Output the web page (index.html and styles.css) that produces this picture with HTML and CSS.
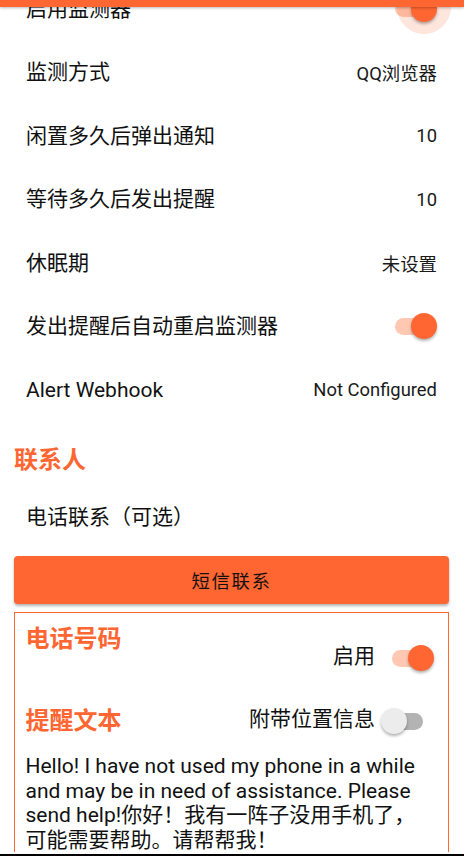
FILE: index.html
```html
<!DOCTYPE html>
<html lang="zh">
<head>
<meta charset="utf-8">
<title>设置</title>
<link rel="stylesheet" href="styles.css">
</head>
<body>
<div class="screen">
  <div class="appbar"></div>
  <div class="content">
    <div class="row">
      <span class="label">启用监测器</span>
      <span class="switch on pressed"><span class="track"></span><span class="thumb"></span></span>
    </div>
    <div class="row">
      <span class="label">监测方式</span>
      <span class="value">QQ浏览器</span>
    </div>
    <div class="row">
      <span class="label">闲置多久后弹出通知</span>
      <span class="value">10</span>
    </div>
    <div class="row">
      <span class="label">等待多久后发出提醒</span>
      <span class="value">10</span>
    </div>
    <div class="row">
      <span class="label">休眠期</span>
      <span class="value">未设置</span>
    </div>
    <div class="row">
      <span class="label">发出提醒后自动重启监测器</span>
      <span class="switch on"><span class="track"></span><span class="thumb"></span></span>
    </div>
    <div class="row latin">
      <span class="label">Alert Webhook</span>
      <span class="value">Not Configured</span>
    </div>

    <div class="section-title">联系人</div>
    <div class="row contact-row">
      <span class="label">电话联系（可选）</span>
    </div>
    <div class="button">短信联系</div>

    <div class="card">
      <div class="card-head phone-head">
        <div class="head-left">
          <div class="card-title">电话号码</div>
          <div class="phone-line"></div>
        </div>
        <div class="head-right">
          <span class="label">启用</span>
          <span class="switch on"><span class="track"></span><span class="thumb"></span></span>
        </div>
      </div>
      <div class="card-head text-head">
        <div class="card-title">提醒文本</div>
        <div class="head-right loc">
          <span class="label">附带位置信息</span>
          <span class="switch off"><span class="track"></span><span class="thumb"></span></span>
        </div>
      </div>
      <p class="message">Hello! I have not used my phone in a while and may be in need of assistance. Please send help!你好！我有一阵子没用手机了，可能需要帮助。请帮帮我！</p>
    </div>
  </div>
  <div class="bottom-line"></div>
</div>
</body>
</html>
```
FILE: styles.css
```css
html, body {
  margin: 0;
  padding: 0;
  background: #ffffff;
}

body {
  font-family: Roboto, "Noto Sans CJK SC", sans-serif;
  color: #111111;
}

.screen {
  position: relative;
  width: 464px;
  height: 856px;
  overflow: hidden;
  background: #fefffe;
}

.appbar {
  position: absolute;
  top: 0;
  left: 0;
  right: 0;
  height: 7px;
  background: #ff6631;
  box-shadow: 0 1px 3px rgba(0, 0, 0, 0.28);
  z-index: 5;
}

.bottom-line {
  position: absolute;
  left: 0;
  right: 0;
  bottom: 0;
  height: 2px;
  background: #000000;
  z-index: 5;
}

.content {
  margin-top: -23px;
}

.row {
  display: flex;
  align-items: center;
  justify-content: space-between;
  height: 63.5px;
  padding: 0 27px 0 26px;
  font-size: 21px;
}

.row .label {
  padding-bottom: 4px;
}

.row.latin .label {
  padding-bottom: 0;
}

.label {
  color: #111111;
  white-space: nowrap;
}

.value {
  font-size: 18.4px;
  color: #1a1a1a;
}

/* switch */
.switch {
  position: relative;
  display: inline-block;
  width: 42px;
  height: 26px;
  flex: none;
}

.switch .track {
  position: absolute;
  left: 0;
  right: 4px;
  top: 4.5px;
  height: 17px;
  border-radius: 9px;
}

.switch .thumb {
  position: absolute;
  top: 0;
  width: 26px;
  height: 26px;
  border-radius: 50%;
  box-shadow: 0 2px 3px rgba(0, 0, 0, 0.3);
}

.switch.on .track {
  background: #ffc8b2;
}

.switch.on .thumb {
  right: 0;
  background: #ff6631;
}

.switch.pressed .thumb {
  box-shadow: 0 2px 3px rgba(0, 0, 0, 0.3), 0 -2px 0 14px rgba(255, 102, 49, 0.16);
}

.switch.off .track {
  left: 4px;
  right: 0;
  background: #b3b3b3;
}

.switch.off .thumb {
  left: 0;
  background: #ececec;
}

/* contacts */
.section-title {
  padding: 24px 14px 2px;
  line-height: 28px;
  font-size: 24px;
  font-weight: 700;
  color: #ff6631;
}

.contact-row {
  margin-top: 10px;
}

.button {
  margin: 7px 15px 0 14px;
  height: 48px;
  display: flex;
  align-items: center;
  justify-content: center;
  background: #ff6631;
  border-radius: 4px;
  box-shadow: 0 2px 3px rgba(0, 0, 0, 0.3);
  font-size: 18.4px;
  letter-spacing: 1.6px;
  color: #111111;
}

.card {
  margin: 8px 15px 0 14px;
  border: 1.5px solid #ff6631;
  border-bottom: none;
  padding: 12px 14px 0 10.5px;
}

.card-head {
  display: flex;
  align-items: center;
  justify-content: space-between;
}

.card-title {
  font-size: 24px;
  line-height: 28px;
  font-weight: 700;
  color: #ff6631;
}

.phone-line {
  height: 38px;
}

.head-right {
  display: flex;
  align-items: center;
  font-size: 21px;
}

.head-right .label {
  line-height: 22px;
  padding-bottom: 4px;
}

.head-right .switch {
  margin-left: 17px;
}

.text-head {
  margin-top: 16px;
}

.head-right.loc {
  margin-right: 11px;
}

.head-right.loc .switch {
  margin-left: 6px;
}

.message {
  margin: 19px 0 0;
  width: 399px;
  font-size: 21px;
  line-height: 24.6px;
  color: #111111;
}
```
